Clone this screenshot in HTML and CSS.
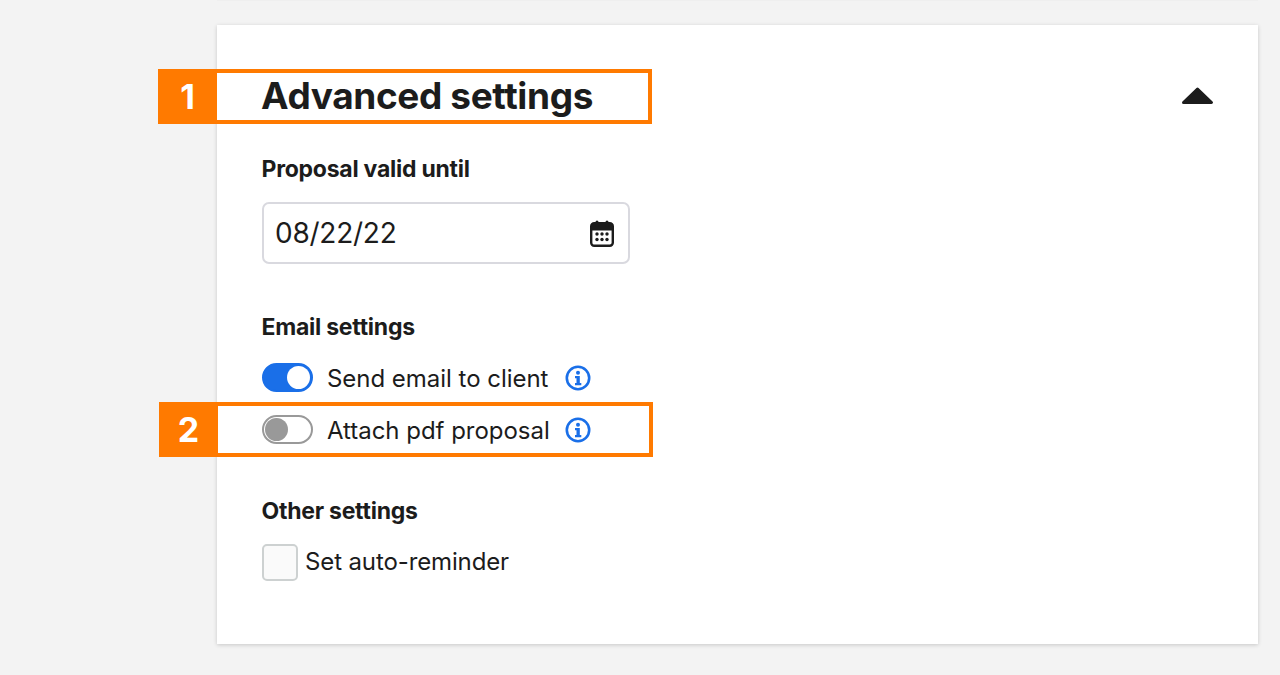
FILE: index.html
```html
<!DOCTYPE html>
<html lang="en">
<head>
<meta charset="utf-8">
<title>Advanced settings</title>
<link rel="stylesheet" href="styles.css">
</head>
<body>
<div class="top-edge"></div>
<main class="card">
  <header class="card-head">
    <h1 class="title">Advanced settings</h1>
    <svg class="caret" width="33" height="20" viewBox="0 0 33 20"><path d="M16.500 3 L30.500 16.500 H2.500 Z" fill="#1c1c1c" stroke="#1c1c1c" stroke-width="3" stroke-linejoin="round"/></svg>
  </header>
  <section class="group-date">
    <h2 class="label">Proposal valid until</h2>
    <div class="input">
      <span class="input-value">08/22/22</span>
      <svg class="cal" width="24" height="27" viewBox="0 0 24 27">
        <rect x="1.2" y="3.2" width="21.6" height="22.6" rx="3" fill="#fff" stroke="#1c1c1c" stroke-width="2.4"/>
        <path d="M1.2 6a3 3 0 0 1 3-3h15.600a3 3 0 0 1 3 3v4.500H1.200z" fill="#1c1c1c"/>
        <rect x="5.500" y="0.500" width="3" height="6" rx="1.500" fill="#1c1c1c"/>
        <rect x="15.500" y="0.500" width="3" height="6" rx="1.500" fill="#1c1c1c"/>
        <g fill="#1c1c1c">
          <circle cx="7" cy="14" r="1.700"/><circle cx="12" cy="14" r="1.700"/><circle cx="17" cy="14" r="1.700"/>
          <circle cx="7" cy="19.500" r="1.700"/><circle cx="12" cy="19.500" r="1.700"/><circle cx="17" cy="19.500" r="1.700"/>
        </g>
      </svg>
    </div>
  </section>
  <section class="group-email">
    <h2 class="label">Email settings</h2>
    <div class="toggle-row">
      <span class="toggle on"><span class="knob"></span></span>
      <span class="text">Send email to client</span>
      <svg class="info" width="26" height="26" viewBox="0 0 26 26"><circle cx="13" cy="13" r="11.200" fill="none" stroke="#1a6fe8" stroke-width="2.600"/><circle cx="13" cy="7.800" r="2" fill="#1a6fe8"/><path d="M10 11h4.800v7h1.500v2.200H10v-2.200h1.500v-4.800H10z" fill="#1a6fe8"/></svg>
    </div>
    <div class="toggle-row">
      <span class="toggle off"><span class="knob"></span></span>
      <span class="text">Attach pdf proposal</span>
      <svg class="info" width="26" height="26" viewBox="0 0 26 26"><circle cx="13" cy="13" r="11.200" fill="none" stroke="#1a6fe8" stroke-width="2.600"/><circle cx="13" cy="7.800" r="2" fill="#1a6fe8"/><path d="M10 11h4.800v7h1.500v2.200H10v-2.200h1.500v-4.800H10z" fill="#1a6fe8"/></svg>
    </div>
  </section>
  <section class="group-other">
    <h2 class="label">Other settings</h2>
    <div class="check-row">
      <span class="checkbox"></span>
      <span class="text">Set auto-reminder</span>
    </div>
  </section>
</main>
<div class="callout callout-one"><span class="badge">1</span></div>
<div class="callout callout-two"><span class="badge">2</span></div>
</body>
</html>
```

FILE: styles.css
```css
* { box-sizing: border-box; }
html, body { margin: 0; height: 675px; overflow: hidden; }
body {
  position: relative;
  background: #f3f3f3;
  color: #1c1c1c;
  font-family: Inter, Lato, sans-serif;
  padding: 25px 22px 0 217px;
}
.top-edge {
  position: absolute; left: 217px; top: 0; width: 1041px; height: 1px;
  background: #efefef;
}
.card {
  background: #fff;
  height: 619px;
  padding: 44px 45px 0;
  box-shadow: 0 1px 4px rgba(0,0,0,.18);
}
.card-head {
  display: flex; justify-content: space-between; align-items: center;
  height: 54px;
}
.title { margin: 0 0 0 -1px; font-size: 37px; font-weight: 700; line-height: 54px; letter-spacing: -0.38px; }
.caret { margin-right: -1px; }
.label { margin: 0 0 0 -0.5px; font-size: 23px; font-weight: 700; line-height: 30px; letter-spacing: -0.25px; }
.group-date { margin-top: 31px; }
.input {
  margin-top: 18px;
  width: 368px; height: 62px;
  border: 2px solid #d9d9df; border-radius: 7px;
  display: flex; align-items: center; justify-content: space-between;
  padding: 0 14px 0 11px;
}
.input-value { font-size: 28px; letter-spacing: -0.25px; }
.group-email { margin-top: 48px; }
.toggle-row { display: flex; align-items: center; height: 29px; margin-top: 21px; }
.toggle-row + .toggle-row { margin-top: 23px; }
.toggle {
  display: flex; align-items: center;
  width: 51px; height: 29px; border-radius: 15px;
  padding: 0 1px;
  border: 2px solid #999;
}
.toggle.on { background: #1a6fe8; border-color: #1a6fe8; justify-content: flex-end; }
.knob { width: 23px; height: 23px; border-radius: 50%; background: #999; }
.toggle.on .knob { background: #fff; }
.text { font-size: 24px; line-height: 30px; }
.toggle-row .text { margin-left: 14px; width: 222px; white-space: nowrap; letter-spacing: -0.03px; position: relative; top: 1px; }
.info { margin-left: 16px; }
.group-other { margin-top: 52px; }
.check-row { display: flex; align-items: center; margin-top: 18px; }
.checkbox {
  width: 36px; height: 37px;
  border: 2px solid #cdd1d1; border-radius: 5px;
  background: #fafafa;
}
.check-row .text { margin-left: 7px; letter-spacing: -0.12px; position: relative; top: -1px; }
.callout {
  position: absolute;
  width: 494px; height: 55px;
  border: 4px solid #ff7a00;
}
.callout-one { left: 158px; top: 69px; }
.callout-two { left: 159px; top: 402px; }
.badge {
  display: flex; align-items: center; justify-content: center;
  width: 51px; height: 47px;
  background: #ff7a00; color: #fff;
  font-size: 34px; font-weight: 700;
  box-shadow: 4px 0 0 #ff7a00;
}
```
